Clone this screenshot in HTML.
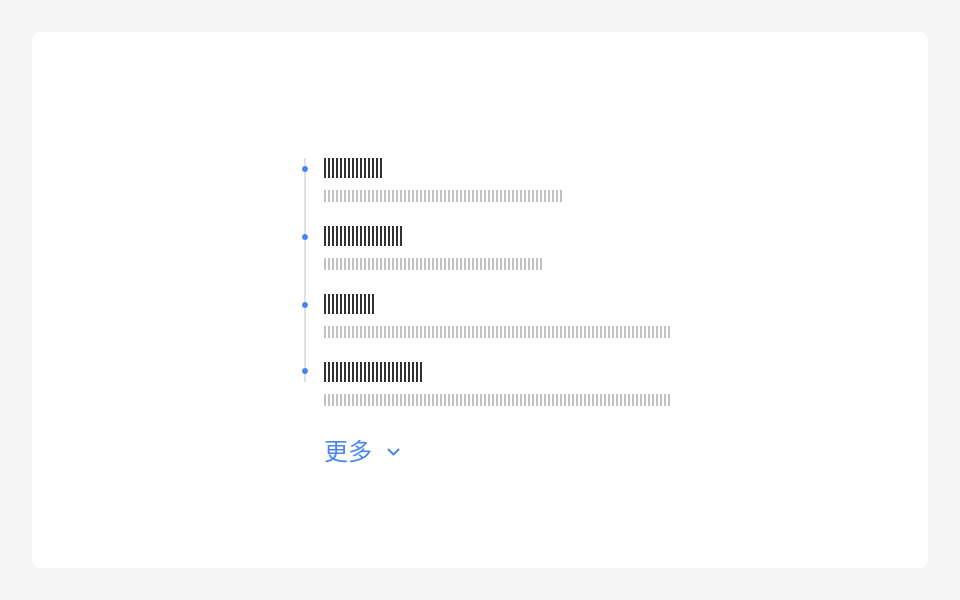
<!DOCTYPE html><html><head><meta charset="utf-8"><style>
body{margin:0;width:960px;height:600px;background:#f5f5f5;position:relative;overflow:hidden}
.card{position:absolute;left:32px;top:32px;width:896px;height:536px;background:#fff;border-radius:8px}
.line{position:absolute;left:304px;top:158px;width:2px;height:224px;background:#e0e0e0}
.dot{position:absolute;left:302px;width:6px;height:6px;border-radius:50%;background:#4285f4}
.t{position:absolute;left:324px;height:20px;background:repeating-linear-gradient(90deg,#333 0 2px,transparent 2px 4px)}
.d{position:absolute;left:324px;height:12px;background:repeating-linear-gradient(90deg,#c2c2c2 0 2px,transparent 2px 4px)}
.more{position:absolute;left:324px;top:438px;font:24px "Liberation Sans","Noto Sans CJK SC",sans-serif;color:#4a86f0;line-height:30px}
</style></head><body>
<div class="card"></div>
<div class="line"></div>
<div class="dot" style="top:166px"></div>
<div class="dot" style="top:234px"></div>
<div class="dot" style="top:302px"></div>
<div class="dot" style="top:368px"></div>
<div class="t" style="top:158px;width:58px"></div>
<div class="d" style="top:190px;width:238px"></div>
<div class="t" style="top:226px;width:78px"></div>
<div class="d" style="top:258px;width:218px"></div>
<div class="t" style="top:294px;width:50px"></div>
<div class="d" style="top:326px;width:346px"></div>
<div class="t" style="top:362px;width:98px"></div>
<div class="d" style="top:394px;width:346px"></div>
<div class="more">更多</div>
<svg style="position:absolute;left:386px;top:446px" width="16" height="12"><path d="M2 3 L7.5 8.5 L13 3" stroke="#4a86f0" stroke-width="2" fill="none"/></svg>
</body></html>
